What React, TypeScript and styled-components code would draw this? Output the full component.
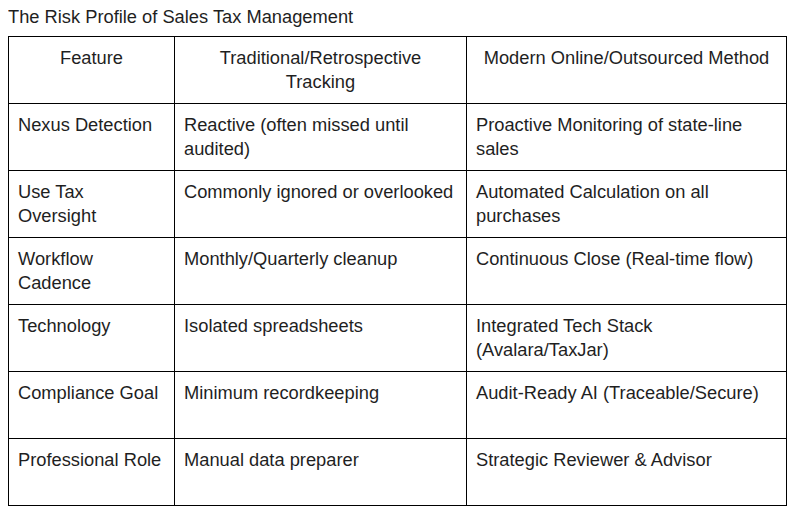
import React from "react";
import styled, { createGlobalStyle } from "styled-components";

const rows: string[][] = [
  ["Nexus Detection", "Reactive (often missed until audited)", "Proactive Monitoring of state-line sales"],
  ["Use Tax Oversight", "Commonly ignored or overlooked", "Automated Calculation on all purchases"],
  ["Workflow Cadence", "Monthly/Quarterly cleanup", "Continuous Close (Real-time flow)"],
  ["Technology", "Isolated spreadsheets", "Integrated Tech Stack (Avalara/TaxJar)"],
  ["Compliance Goal", "Minimum recordkeeping", "Audit-Ready AI (Traceable/Secure)"],
  ["Professional Role", "Manual data preparer", "Strategic Reviewer & Advisor"],
];

export default function App() {
  return (
    <>
      <GlobalStyle />
      <Title>The Risk Profile of Sales Tax Management</Title>
      <Table>
        <colgroup>
          <col style={{ width: 166 }} />
          <col style={{ width: 292 }} />
          <col />
        </colgroup>
        <thead>
          <tr>
            <HeadCell>Feature</HeadCell>
            <HeadCell>Traditional/Retrospective Tracking</HeadCell>
            <HeadCell>Modern Online/Outsourced Method</HeadCell>
          </tr>
        </thead>
        <tbody>
          {rows.map((row) => (
            <tr key={row[0]}>
              {row.map((cell) => (
                <Cell key={cell}>{cell}</Cell>
              ))}
            </tr>
          ))}
        </tbody>
      </Table>
    </>
  );
}

// -------------------------- style --------------------------

const GlobalStyle = createGlobalStyle`
  body {
    margin: 8px;
    background: #ffffff;
    color: #1f1f1f;
    font-family: "Liberation Sans", Arial, sans-serif;
  }
`;

const Title = styled.div`
  font-size: 18.3px;
  line-height: 18px;
  margin-bottom: 10px;
`;

const Table = styled.table`
  width: 779px;
  border-collapse: collapse;
  table-layout: fixed;
  font-size: 18.3px;
  line-height: 24px;
`;

const Cell = styled.td`
  border: 1px solid #000;
  padding: 9px 9px;
  height: 47.8px;
  vertical-align: top;
  text-align: left;
  box-sizing: content-box;
`;

const HeadCell = styled(Cell).attrs({ as: "th" })`
  font-weight: normal;
  text-align: center;
`;
